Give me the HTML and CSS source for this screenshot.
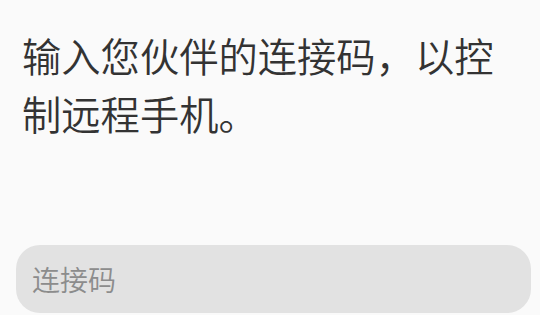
FILE: index.html
```html
<!DOCTYPE html>
<html lang="zh-CN">
<head>
<meta charset="utf-8">
<link rel="stylesheet" href="styles.css">
</head>
<body>
<main class="screen">
  <p class="prompt">输入您伙伴的连接码，以控制远程手机。</p>
  <div class="field">
    <input class="code-input" type="text" placeholder="连接码">
  </div>
</main>
</body>
</html>
```
FILE: styles.css
```css
html, body {
  margin: 0;
  padding: 0;
  background: #fafafa;
}
.screen {
  width: 540px;
  height: 315px;
  overflow: hidden;
  display: flex;
  flex-direction: column;
  font-family: "Noto Sans CJK SC", "Noto Sans", sans-serif;
}
.prompt {
  margin: 26px 24px 0 22px;
  font-size: 39.3px;
  font-weight: 350;
  line-height: 58px;
  color: #333333;
}
.field {
  margin: 0 9px 0 16px;
  margin-top: auto;
  margin-bottom: 2px;
}
.code-input {
  box-sizing: border-box;
  width: 100%;
  height: 68px;
  border: none;
  outline: none;
  border-radius: 24px;
  background: #e2e2e2;
  padding: 0 16px;
  font-family: "Noto Sans CJK SC", "Noto Sans", sans-serif;
  font-size: 28px;
  font-weight: 350;
  color: #333333;
}
.code-input::placeholder {
  color: #8c8c8c;
}
```
